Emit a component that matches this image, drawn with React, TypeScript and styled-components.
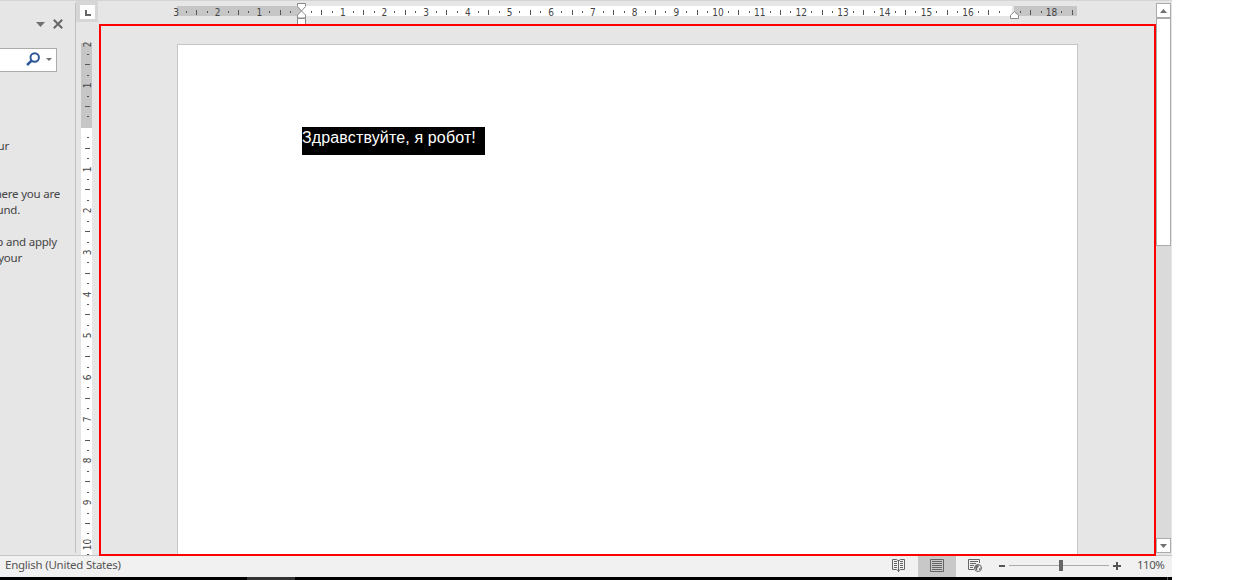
import React from 'react';
import styled, { createGlobalStyle, css } from 'styled-components';

const Global = createGlobalStyle`
  * { box-sizing: border-box; }
  html, body { margin: 0; padding: 0; background: #fff; overflow: hidden; }
`;

const Window = styled.div`
  width: 1172px;
  height: 580px;
  display: flex;
  flex-direction: column;
  background: #e6e6e6;
  color: #444;
  font-family: 'Noto Sans', 'Open Sans', sans-serif;
  font-size: 11.5px;
  border-top: 1px solid #d4d4d4;
`;

const Main = styled.div`
  display: flex;
  height: 554px;
  flex: none;
`;

const Pane = styled.aside`
  width: 76px;
  height: 550px;
  margin-top: 2px;
  border-right: 1px solid #c0c0c0;
  overflow: hidden;
  flex: none;
`;

const PaneHeader = styled.div`
  display: flex;
  justify-content: flex-end;
  align-items: center;
  gap: 8px;
  height: 12px;
  margin-top: 15px;
  padding-right: 12px;
`;

const SearchBox = styled.div`
  display: flex;
  align-items: center;
  justify-content: flex-end;
  gap: 6px;
  width: 57px;
  height: 24px;
  margin-top: 18px;
  padding: 0 4px 2px 0;
  background: #fff;
  border: 1px solid #ababab;
  border-left: 0;
`;

const PaneText = styled.div<{ $right: number; $gap?: number }>`
  width: ${p => p.$right}px;
  margin-top: ${p => p.$gap ?? 0}px;
  height: 16px;
  line-height: 16px;
  display: flex;
  justify-content: flex-end;
  white-space: pre;
  letter-spacing: -0.22px;
`;

const SideRuler = styled.div`
  width: 23px;
  display: flex;
  flex-direction: column;
  flex: none;
`;

const TabCorner = styled.div`
  width: 22px;
  height: 21px;
  padding: 4px 0 0 4px;
  background: #d6d6d6;
`;

const TabButton = styled.div`
  width: 15px;
  height: 14px;
  padding: 5px 0 0 5px;
  line-height: 0;
  background: #fdfdfd;
`;

const VTrack = styled.div`
  width: 11px;
  height: 515px;
  margin: 18px 0 0 5px;
  display: flex;
  flex-direction: column;
  background: linear-gradient(transparent 3px, #c6c6c6 3px 88px, #fff 88px);
  overflow: hidden;
`;

const VMarks = styled.div`
  display: flex;
  flex-direction: column;
  align-items: center;
  margin: -1.2px 0 0 2px;
`;

const rulerFont = css`
  font-family: 'DejaVu Sans Condensed', 'DejaVu Sans', sans-serif;
  font-stretch: condensed;
  font-size: 10px;
  line-height: 11px;
  color: #444;
`;

const VMark = styled.div`
  ${rulerFont}
  height: 10.43px;
  width: 11px;
  flex: none;
  display: flex;
  align-items: center;
  justify-content: center;
`;

const VNumber = styled.span`
  transform: rotate(-90deg);
`;

const Tick = styled.i<{ $w: number; $h: number }>`
  width: ${p => p.$w}px;
  height: ${p => p.$h}px;
  background: #555;
`;

const Center = styled.div`
  width: 1057px;
  display: flex;
  flex-direction: column;
  flex: none;
`;

const TopRuler = styled.div`
  position: relative;
  height: 23px;
  padding: 5px 0 0 78px;
  flex: none;
`;

const HTrack = styled.div`
  width: 900px;
  height: 10px;
  display: flex;
  align-items: center;
  background: linear-gradient(to right, #c6c6c6 124px, #fff 124px 835px, #e6e6e6 835px 837px, #c6c6c6 837px);
`;

const HMarks = styled.div`
  display: flex;
  margin-left: -6.2px;
  padding-top: 2px;
`;

const HMark = styled.div`
  ${rulerFont}
  width: 10.435px;
  height: 11px;
  flex: none;
  display: flex;
  align-items: center;
  justify-content: center;
`;

const Indent = styled.svg<{ $x: number; $y: number }>`
  position: absolute;
  left: ${p => p.$x}px;
  top: ${p => p.$y}px;
  display: block;
`;

const Canvas = styled.main`
  height: 532px;
  border: 2px solid #f00;
  padding: 18px 0 0 76px;
  position: relative;
  z-index: 1;
  flex: none;
  overflow: hidden;
`;

const Page = styled.article`
  width: 901px;
  height: 520px;
  background: #fff;
  border: 1px solid #c6c6c6;
  padding: 82px 0 0 124px;
`;

const Selection = styled.p`
  margin: 0;
  width: 183px;
  height: 28px;
  background: #000;
  color: #fff;
  font: 16px/21px 'Liberation Sans', Arial, sans-serif;
  letter-spacing: 0.14px;
  white-space: nowrap;
`;

const ScrollBar = styled.div`
  width: 16px;
  height: 550px;
  margin-top: 2px;
  display: flex;
  flex-direction: column;
  background: #dadada;
  border-right: 1px solid #e6e6e6;
  flex: none;
`;

const ScrollButton = styled.div`
  width: 15px;
  height: 15px;
  flex: none;
  display: flex;
  align-items: center;
  justify-content: center;
  background: #fff;
  border: 1px solid #ababab;
`;

const Thumb = styled.div`
  width: 15px;
  height: 228px;
  background: #fff;
  border: 1px solid #ababab;
`;

const Spacer = styled.div`
  flex: 1;
`;

const StatusBar = styled.footer`
  height: 22px;
  flex: none;
  display: flex;
  align-items: center;
  background: #f1f1f1;
  border-top: 1px solid #c6c6c6;
  padding: 0 8px 0 5px;
  color: #555;
`;

const Label = styled.span<{ $spacing: number; $width?: number }>`
  width: ${p => (p.$width ? `${p.$width}px` : 'auto')};
  letter-spacing: ${p => p.$spacing}px;
  line-height: 16px;
  white-space: nowrap;
  margin-top: -4px;
`;

const ViewButton = styled.div<{ $active?: boolean }>`
  width: 38px;
  height: 21px;
  padding-bottom: 2px;
  display: flex;
  align-items: center;
  justify-content: center;
  background: ${p => (p.$active ? '#c8c8c8' : 'transparent')};
`;

const Zoom = styled.div`
  display: flex;
  align-items: center;
  height: 21px;
  padding-bottom: 1px;
  margin: 0 14px 0 5px;
`;

const Taskbar = styled.div`
  height: 3px;
  flex: none;
  background: linear-gradient(to right, #000 247px, #333 247px 295px, #000 295px 1167px, #555 1167px 1168px, #000 1168px);
`;

const range = (from: number, to: number) => Array.from({ length: to - from + 1 }, (_, i) => from + i);

const HorizontalMarks = () => (
  <HMarks>
    {range(-12, 74).map(q => {
      const hidden = q === 0 || q === 68;
      const part = ((q % 4) + 4) % 4;
      return (
        <HMark key={q}>
          {hidden ? null : part === 0 ? Math.abs(q / 4) : part === 2 ? <Tick $w={1} $h={5} /> : <Tick $w={1} $h={2} />}
        </HMark>
      );
    })}
  </HMarks>
);

const VerticalMarks = () => (
  <VMarks>
    {range(-8, 41).map(q => {
      const part = ((q % 4) + 4) % 4;
      return (
        <VMark key={q}>
          {q === 0 ? null : part === 0 ? <VNumber>{Math.abs(q / 4)}</VNumber> : part === 2 ? <Tick $w={5} $h={1} /> : <Tick $w={2} $h={1} />}
        </VMark>
      );
    })}
  </VMarks>
);

const Arrow = ({ up = false, w = 9, h = 5 }: { up?: boolean; w?: number; h?: number }) => (
  <svg width={w} height={h} viewBox="0 0 10 5" preserveAspectRatio="none">
    <path d={up ? 'M0 5L5 0L10 5Z' : 'M0 0H10L5 5Z'} fill="#707070" />
  </svg>
);

export default function App() {
  return (
    <>
      <Global />
      <Window>
        <Main>
          <Pane>
            <PaneHeader>
              <Arrow />
              <svg width="10" height="10" viewBox="0 0 10 10">
                <path d="M.8.8L9.2 9.2M9.2.8L.8 9.2" stroke="#666" strokeWidth="2" />
              </svg>
            </PaneHeader>
            <SearchBox>
              <svg width="14" height="14" viewBox="0 0 14 14" fill="none" stroke="#2b579a">
                <circle cx="8.7" cy="5.5" r="4.2" strokeWidth="2" />
                <path d="M5.8 8.5L1 13" strokeWidth="2.4" />
              </svg>
              <Arrow w={6} h={3} />
            </SearchBox>
            <PaneText $right={9} $gap={66}>your</PaneText>
            <PaneText $right={60} $gap={32}>where you are</PaneText>
            <PaneText $right={20}>found.</PaneText>
            <PaneText $right={57} $gap={16}>up and apply</PaneText>
            <PaneText $right={22}>your</PaneText>
          </Pane>
          <SideRuler>
            <TabCorner>
              <TabButton>
                <svg width="6" height="6" viewBox="0 0 6 6"><path d="M1 0V5H6" fill="none" stroke="#666" strokeWidth="2" /></svg>
              </TabButton>
            </TabCorner>
            <VTrack><VerticalMarks /></VTrack>
          </SideRuler>
          <Center>
            <TopRuler>
              <HTrack><HorizontalMarks /></HTrack>
              <Indent $x={198} $y={2} width="9" height="21" viewBox="0 0 9 21">
                <path d="M.5.5H8.5V3.5L4.5 8L.5 3.5ZM.5 15V12L4.5 8L8.5 12V15ZM.5 15.5H8.5V22H.5Z" fill="#fff" stroke="#8a8a8a" />
              </Indent>
              <Indent $x={911} $y={10} width="9" height="8" viewBox="0 0 9 8">
                <path d="M.5 7.5V4.2L4.5.7L8.5 4.2V7.5Z" fill="#fff" stroke="#8a8a8a" />
              </Indent>
            </TopRuler>
            <Canvas>
              <Page><Selection>Здравствуйте, я робот!</Selection></Page>
            </Canvas>
          </Center>
          <ScrollBar>
            <ScrollButton><Arrow up w={7} h={4} /></ScrollButton>
            <Thumb />
            <Spacer />
            <ScrollButton><Arrow w={7} h={4} /></ScrollButton>
          </ScrollBar>
        </Main>
        <StatusBar>
          <Label $spacing={-0.24}>English (United States)</Label>
          <Spacer />
          <ViewButton>
            <svg width="14" height="13" viewBox="0 0 14 13" fill="none" stroke="#666">
              <path d="M6.5 1V13M.5.5H4.5L6.5 2L8.5 .5H12.5V10.5H8.5L6.5 12L4.5 10.5H.5ZM2 2.5H5M2 4.5H5M2 6.5H5M2 8.5H5M8 2.5H11M8 4.5H11M8 6.5H11M8 8.5H11" />
            </svg>
          </ViewButton>
          <ViewButton $active>
            <svg width="14" height="13" viewBox="0 0 14 13" fill="none" stroke="#666">
              <path d="M.5.5H13.5V12.5H.5ZM2 2.5H12M2 4.5H12M2 6.5H12M2 8.5H12M2 10.5H12" />
            </svg>
          </ViewButton>
          <ViewButton>
            <svg width="14" height="13" viewBox="0 0 14 13" fill="none" stroke="#666">
              <path d="M6 10.5H.5V.5H11.5V4M2 2.5H10M2 4.5H8M2 6.5H6M2 8.5H5" />
              <circle cx="10" cy="9" r="3.5" />
              <path d="M7 8L8.5 6L11 6.5L10.5 8L9 9L9.5 11L8 11ZM11.5 9L13 8.5L12 11L11 11Z" fill="#666" stroke="none" />
            </svg>
          </ViewButton>
          <Zoom>
            <svg width="124" height="12" viewBox="0 0 124 12">
              <path d="M0 6H6" stroke="#555" strokeWidth="2" />
              <path d="M10 5.5H110" stroke="#aaa" />
              <path d="M60 0H64V11H60Z" fill="#666" />
              <path d="M114 6H122M118 2V10" stroke="#555" strokeWidth="2" />
            </svg>
          </Zoom>
          <Label $spacing={-0.5} $width={27}>110%</Label>
        </StatusBar>
        <Taskbar />
      </Window>
    </>
  );
}
